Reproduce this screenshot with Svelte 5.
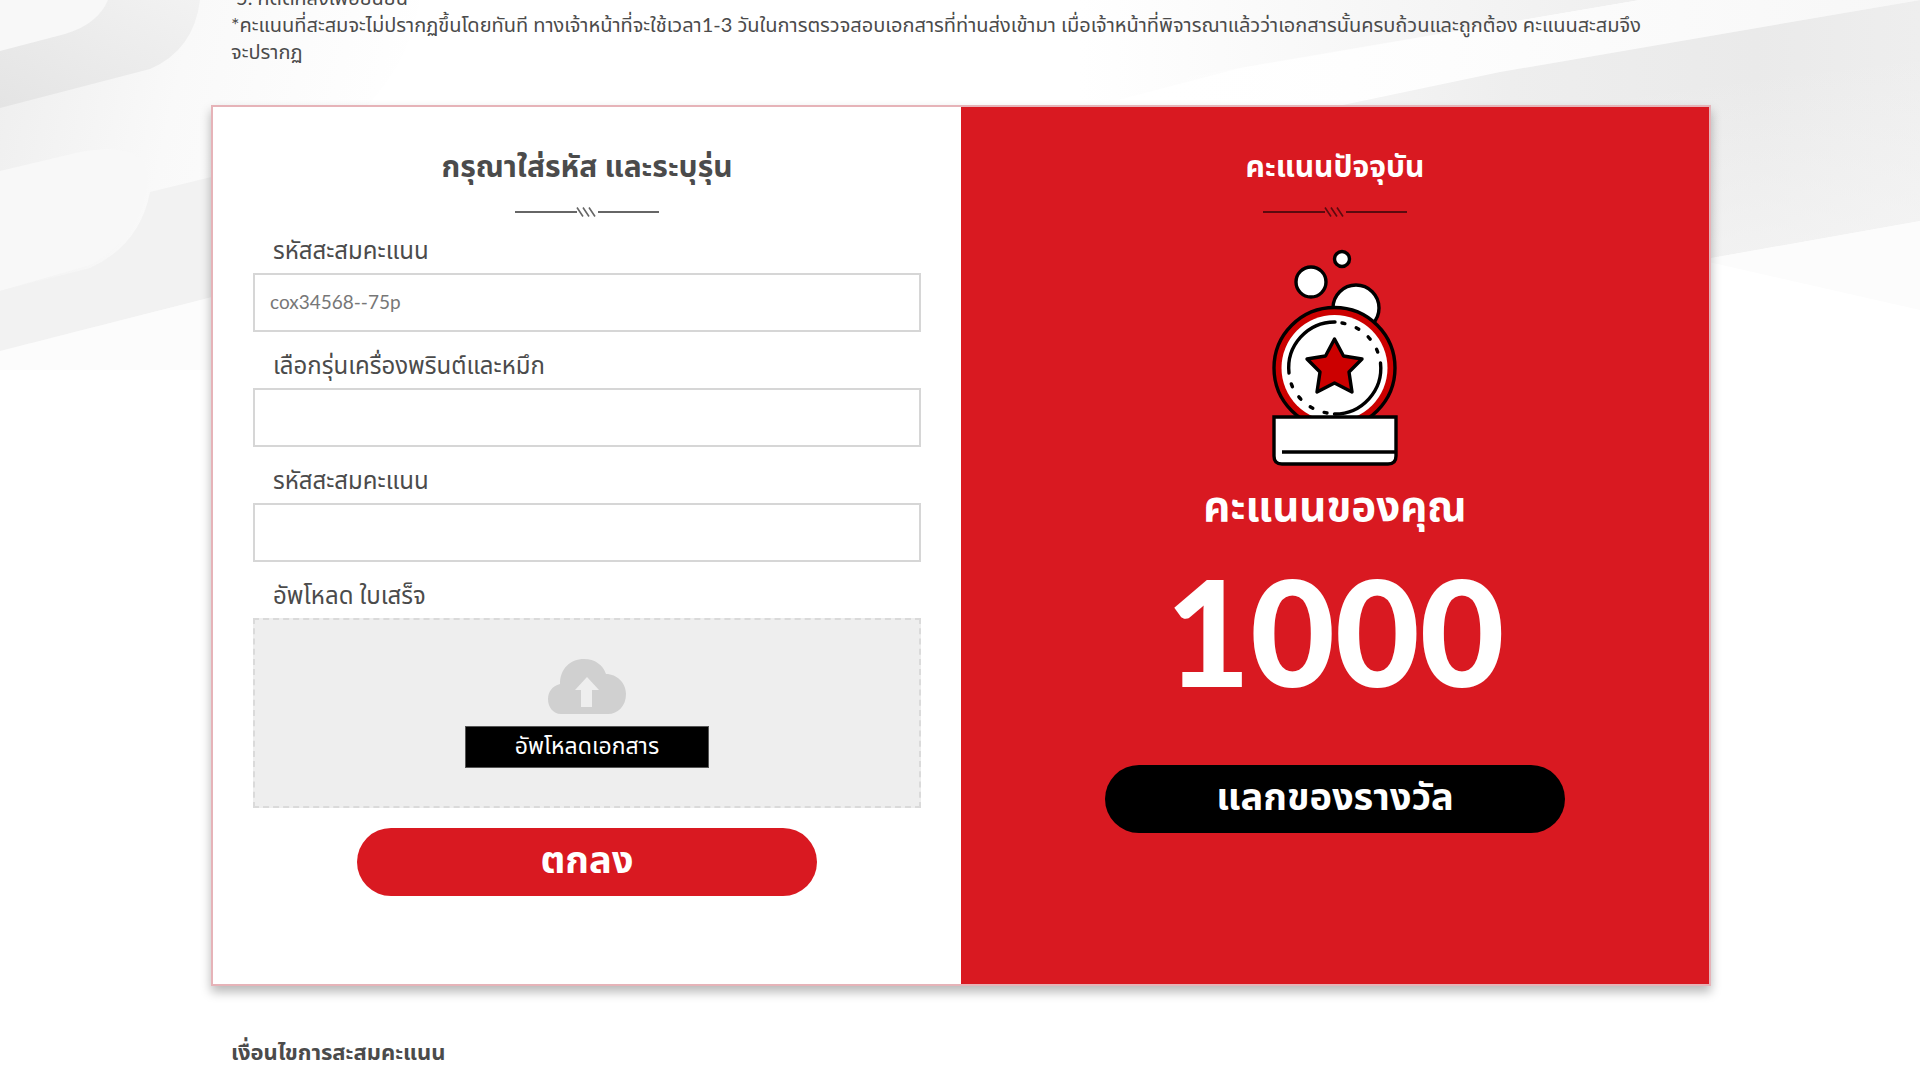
<script lang="ts">
    let code = $state("");
    let model = $state("");
    let code2 = $state("");
    let points = $state(1000);
    let fileInput: HTMLInputElement;

    function handleSubmit(e: SubmitEvent) {
        e.preventDefault();
    }
</script>

{#snippet divider()}
    <svg class="divider" width="144" height="10" viewBox="0 0 144 10" aria-hidden="true">
        <path d="M0 5H62M83 5H144" stroke-width="2" />
        <path d="M62 0.5l6 9M68 0.5l6 9M74 0.5l6 9" stroke-width="1.6" />
    </svg>
{/snippet}

<div class="page">
    <svg class="backdrop" viewBox="0 0 1920 380" preserveAspectRatio="none" aria-hidden="true">
        <defs>
            <linearGradient id="fade-left" x1="0" x2="1" y1="0" y2="0.2">
                <stop offset="0" stop-color="#eeeeee" />
                <stop offset="0.45" stop-color="#f9f9f9" />
                <stop offset="1" stop-color="#ffffff" />
            </linearGradient>
            <linearGradient id="band-left" x1="0" x2="1" y1="1" y2="0">
                <stop offset="0" stop-color="#e4e4e4" />
                <stop offset="1" stop-color="#f2f2f2" />
            </linearGradient>
            <linearGradient id="band-right" x1="0" x2="1" y1="0" y2="0">
                <stop offset="0" stop-color="#ffffff" />
                <stop offset="0.5" stop-color="#eeeeee" />
                <stop offset="0.8" stop-color="#eaeaea" />
                <stop offset="1" stop-color="#eeeeee" />
            </linearGradient>
            <linearGradient id="lower-right" x1="0.4" x2="0.7" y1="0" y2="1">
                <stop offset="0.3" stop-color="#f6f6f6" stop-opacity="0" />
                <stop offset="1" stop-color="#f6f6f6" />
            </linearGradient>
            <linearGradient id="strip-right" x1="0" x2="1" y1="0" y2="0">
                <stop offset="0" stop-color="#ffffff" />
                <stop offset="1" stop-color="#efefef" />
            </linearGradient>
            <linearGradient id="sheet-right" x1="0" x2="1" y1="0" y2="0">
                <stop offset="0" stop-color="#ffffff" stop-opacity="0" />
                <stop offset="0.5" stop-color="#fcfcfc" />
                <stop offset="1" stop-color="#f7f7f7" />
            </linearGradient>
        </defs>
        <path d="M0 0H420Q400 130 212 200V370H0Z" fill="url(#fade-left)" />
        <path d="M0 171L80 152Q148 140 148 180Q140 240 90 265L0 291Z" fill="#f8f8f8" />
        <path d="M0 291L90 268Q140 245 150 192L280 160V280L0 351Z" fill="#f2f2f2" />
        <path d="M0 351L280 280V370H0Z" fill="#fcfcfc" />
        <path d="M0 0H200Q194 50 150 69L0 108Z" fill="url(#band-left)" />
        <path d="M0 0H108Q98 24 65 34L0 51Z" fill="#f8f8f8" />
        <path d="M1080 0H1640L1240 68L1080 110Z" fill="url(#strip-right)" />
        <path d="M1120 88L1640 0H1920L1500 72L1120 150Z" fill="url(#sheet-right)" />
        <path d="M1100 156L1500 72L1920 0V221L1700 260L1100 360Z" fill="url(#band-right)" />
        <path d="M1100 156L1500 72L1920 0V221L1700 260L1100 360Z" fill="url(#lower-right)" />
        <path d="M1700 260L1920 221V310Z" fill="#fcfcfc" />
    </svg>

    <main class="container">
        <section class="steps">
            <p>&nbsp;5. กดตกลงเพื่อยืนยัน</p>
            <p>
                *คะแนนที่สะสมจะไม่ปรากฏขึ้นโดยทันที ทางเจ้าหน้าที่จะใช้เวลา1-3
                วันในการตรวจสอบเอกสารที่ท่านส่งเข้ามา
                เมื่อเจ้าหน้าที่พิจารณาแล้วว่าเอกสารนั้นครบถ้วนและถูกต้อง
                คะแนนสะสมจึง<br />จะปรากฏ
            </p>
        </section>

        <div class="card">
            <form class="panel form-panel" onsubmit={handleSubmit}>
                <h2>กรุณาใส่รหัส และระบุรุ่น</h2>
                {@render divider()}

                <div class="field">
                    <label for="code">รหัสสะสมคะแนน</label>
                    <input id="code" type="text" bind:value={code} placeholder="cox34568--75p" />
                </div>

                <div class="field">
                    <label for="model">เลือกรุ่นเครื่องพรินต์และหมึก</label>
                    <input id="model" type="text" bind:value={model} />
                </div>

                <div class="field">
                    <label for="code2">รหัสสะสมคะแนน</label>
                    <input id="code2" type="text" bind:value={code2} />
                </div>

                <div class="field">
                    <label for="receipt">อัพโหลด ใบเสร็จ</label>
                    <div class="upload">
                        <input id="receipt" type="file" hidden bind:this={fileInput} />
                        <svg width="80" height="56" viewBox="0 0 80 56" aria-hidden="true">
                            <path
                                d="M14 56C6 56 1 49 1 41C1 34 5 28 13 26C13 11 23 1 37 1C48 1 56 7 59 16C70 16 79 25 79 36C79 48 71 56 61 56Z"
                                fill="#d0d0d0"
                            />
                            <path d="M40 19L52 32H45V49H34V32H28Z" fill="#eeeeee" />
                        </svg>
                        <button type="button" class="upload-btn" onclick={() => fileInput.click()}>
                            อัพโหลดเอกสาร
                        </button>
                    </div>
                </div>

                <button type="submit" class="btn btn-red">ตกลง</button>
            </form>

            <section class="panel score-panel">
                <h2>คะแนนปัจจุบัน</h2>
                {@render divider()}

                <svg class="trophy" width="126" height="220" viewBox="0 0 126 220" aria-hidden="true">
                    <g fill="#fff" stroke="#000" stroke-width="3.4">
                        <circle cx="70" cy="10" r="7.5" />
                        <circle cx="39" cy="33" r="15" />
                        <circle cx="84" cy="59" r="23" />
                        <circle cx="62.5" cy="119" r="60.5" fill="#cc0000" />
                        <circle cx="62.5" cy="119" r="53" stroke="none" />
                        <g fill="none" stroke-linecap="round">
                            <path d="M17 124A46 46 0 0 1 63 73" />
                            <path d="M108.500 114A46 46 0 0 1 62.500 165" />
                            <path d="M70 74A46 46 0 0 1 107 107" stroke-dasharray="3 12" />
                            <path d="M55 164A46 46 0 0 1 18 131" stroke-dasharray="3 12" />
                        </g>
                        <path
                            d="M62.500 90L71.500 107L90 110L77 123L80 143L62.500 134L45 143L48 123L35 110L53.500 107Z"
                            fill="#cc0000"
                            stroke-linejoin="round"
                        />
                        <path d="M2 168H124V207Q124 215 116 215H10Q2 215 2 207Z" />
                        <path d="M10 203H123" />
                    </g>
                </svg>

                <p class="score-label">คะแนนของคุณ</p>
                <p class="score">{points}</p>
                <button type="button" class="btn btn-black">แลกของรางวัล</button>
            </section>
        </div>

        <h3>เงื่อนไขการสะสมคะแนน</h3>
    </main>
</div>

<style>
    :global(body) {
        margin: 0;
        background: #fff;
    }

    .page {
        position: relative;
        overflow: hidden;
        padding-left: 2px;
        font-family: Lato, "Noto Sans Thai", "Noto Sans", sans-serif;
        font-size: 20px;
        color: #4b4b4b;
    }

    .backdrop {
        position: absolute;
        top: 0;
        left: 0;
        width: 100%;
        height: 380px;
        z-index: -1;
    }

    .container {
        max-width: 1500px;
        margin: 0 auto;
    }

    .steps {
        padding: 0 20px;
        margin-top: -16px;
        font-size: 20px;
        line-height: 27px;
    }

    .steps p {
        margin: 0;
    }

    .card {
        display: grid;
        grid-template-columns: 1fr 1fr;
        margin-top: 40px;
        border: 2px solid #e6b3b8;
        box-sizing: border-box;
        background: #fff;
        box-shadow: 0 6px 10px rgba(0, 0, 0, 0.28);
    }

    .panel {
        display: flex;
        flex-direction: column;
        align-items: center;
        padding: 40px 40px 88px;
    }

    h2 {
        margin: 0 0 24px;
        font-size: 30px;
        line-height: 36px;
        font-weight: 700;
    }

    .divider {
        fill: none;
        stroke: #666;
    }

    .score-panel .divider {
        stroke: #5c0a0f;
    }

    .field {
        width: 100%;
        display: flex;
        flex-direction: column;
        margin-top: 16px;
    }

    .field label {
        padding-left: 20px;
        height: 40px;
        font-size: 24px;
        line-height: 34px;
    }

    .field input[type="text"] {
        height: 59px;
        box-sizing: border-box;
        border: 2px solid #d6d6d6;
        padding: 0 15px 2px;
        font-family: inherit;
        font-size: 19px;
        color: #4b4b4b;
        outline: none;
    }

    .field input::placeholder {
        color: #777;
        opacity: 1;
    }

    .upload {
        display: flex;
        flex-direction: column;
        align-items: center;
        justify-content: center;
        gap: 12px;
        height: 190px;
        box-sizing: border-box;
        border: 2px dashed #dadada;
        background: #eee;
    }

    .upload-btn {
        width: 244px;
        height: 42px;
        border: 1px solid #555;
        background: #000;
        color: #fff;
        font-family: inherit;
        font-size: 23px;
        line-height: 36px;
        padding: 0 0 4px;
        cursor: pointer;
    }

    .btn {
        width: 460px;
        height: 68px;
        border: none;
        border-radius: 34px;
        color: #fff;
        padding: 0 0 8px;
        font-family: inherit;
        font-size: 38px;
        line-height: 60px;
        font-weight: 700;
        cursor: pointer;
    }

    .btn-red {
        margin-top: 20px;
        background: #d91921;
    }

    .btn-black {
        margin-top: 44px;
        background: #000;
    }

    .score-panel {
        background: #d91921;
        color: #fff;
    }

    .trophy {
        margin-top: 32px;
    }

    .score-label {
        margin: 6px 0 0;
        font-size: 42px;
        line-height: 60px;
        font-weight: 700;
    }

    .score {
        margin: 6px 0 0;
        font-size: 146px;
        line-height: 180px;
        font-weight: 900;
    }

    h3 {
        margin: 46px 20px 0;
        font-size: 22px;
        line-height: 40px;
        font-weight: 700;
    }
</style>
